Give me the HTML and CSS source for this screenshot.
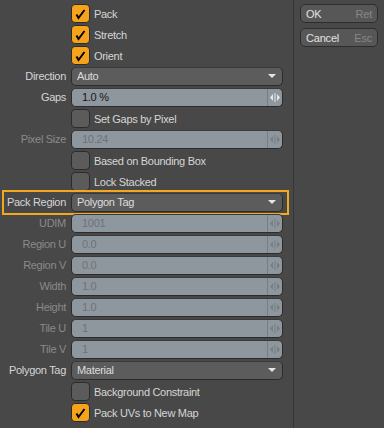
FILE: index.html
```html
<!DOCTYPE html>
<html lang="en">
<head>
    <meta charset="UTF-8">
    <title>Pack UVs</title>
    <link rel="stylesheet" href="styles.css">
</head>
<body>
    <div class="form-panel">
        <div class="row"><span></span><label class="check"><span class="box on"></span>Pack</label></div>
        <div class="row"><span></span><label class="check"><span class="box on"></span>Stretch</label></div>
        <div class="row"><span></span><label class="check"><span class="box on"></span>Orient</label></div>
        <div class="row"><span class="label">Direction</span><div class="field select">Auto</div></div>
        <div class="row"><span class="label">Gaps</span><div class="field number">1.0 %</div></div>
        <div class="row"><span></span><label class="check"><span class="box"></span>Set Gaps by Pixel</label></div>
        <div class="row off"><span class="label">Pixel Size</span><div class="field number">10.24</div></div>
        <div class="row"><span></span><label class="check"><span class="box"></span>Based on Bounding Box</label></div>
        <div class="row"><span></span><label class="check"><span class="box"></span>Lock Stacked</label></div>
        <div class="row highlight"><span class="label">Pack Region</span><div class="field select">Polygon Tag</div></div>
        <div class="row off"><span class="label">UDIM</span><div class="field number">1001</div></div>
        <div class="row off"><span class="label">Region U</span><div class="field number">0.0</div></div>
        <div class="row off"><span class="label">Region V</span><div class="field number">0.0</div></div>
        <div class="row off"><span class="label">Width</span><div class="field number">1.0</div></div>
        <div class="row off"><span class="label">Height</span><div class="field number">1.0</div></div>
        <div class="row off"><span class="label">Tile U</span><div class="field number">1</div></div>
        <div class="row off"><span class="label">Tile V</span><div class="field number">1</div></div>
        <div class="row"><span class="label">Polygon Tag</span><div class="field select">Material</div></div>
        <div class="row"><span></span><label class="check"><span class="box"></span>Background Constraint</label></div>
        <div class="row"><span></span><label class="check"><span class="box on"></span>Pack UVs to New Map</label></div>
    </div>
    <div class="side-panel">
        <button class="btn"><span>OK</span><span class="key">Ret</span></button>
        <button class="btn"><span>Cancel</span><span class="key">Esc</span></button>
    </div>
</body>
</html>
```

FILE: styles.css
```css
body {
    margin: 0;
    width: 384px;
    height: 428px;
    background-color: #484848;
    font-family: 'Liberation Sans', Arial, sans-serif;
    font-size: 11px;
    letter-spacing: -0.3px;
    color: #d6d6d6;
    display: flex;
    overflow: hidden;
}
.form-panel {
    width: 294px;
    padding-top: 4px;
    border-right: 1px solid #363636;
    box-sizing: border-box;
}
.row {
    display: grid;
    grid-template-columns: 66px 212px;
    column-gap: 5px;
    width: 283px;
    height: 21px;
}
.label {
    text-align: right;
    line-height: 19px;
    white-space: nowrap;
}
.row.off .label {
    color: #8a8a8a;
}
.row.highlight {
    position: relative;
}
.row.highlight::after {
    content: "";
    position: absolute;
    left: 2px;
    right: -6px;
    top: -3px;
    bottom: -1px;
    border: 2px solid #f3a81d;
}
.check {
    display: flex;
    align-items: center;
    gap: 4px;
    height: 19px;
    white-space: nowrap;
}
.box {
    width: 17px;
    height: 17px;
    border: 1px solid #2c2c2c;
    border-radius: 4px;
    background-color: #5b5b5b;
    flex: none;
}
.box.on {
    background-color: #f6a31c;
    background-image: url("data:image/svg+xml,%3Csvg xmlns='http://www.w3.org/2000/svg' width='17' height='17'%3E%3Cpath d='M4.5 9.5 L6.5 13 L12.5 5' fill='none' stroke='%23000' stroke-width='2'/%3E%3C/svg%3E");
}
.field {
    height: 19px;
    box-sizing: border-box;
    border: 1px solid #2b2b2b;
    border-top-color: #3a3a3a;
    border-radius: 5px;
    line-height: 17px;
    position: relative;
    white-space: nowrap;
}
.select {
    background-color: #5c5c5c;
    color: #dcdcdc;
    padding-left: 5px;
}
.select::after {
    content: "";
    position: absolute;
    right: 6px;
    top: 6px;
    border-left: 4px solid transparent;
    border-right: 4px solid transparent;
    border-top: 4px solid #e6e6e6;
}
.number {
    background-color: #8f979e;
    color: #161616;
    padding-left: 10px;
}
.row.off .number {
    color: #6d7378;
}
.number::after {
    content: "";
    position: absolute;
    right: 0;
    top: 0;
    bottom: 0;
    width: 14px;
    border-left: 1px solid #767d83;
    background-image: url("data:image/svg+xml,%3Csvg xmlns='http://www.w3.org/2000/svg' width='14' height='17'%3E%3Cpath d='M5 5 L2 8.5 L5 12 Z M9 5 L12 8.5 L9 12 Z' fill='%23e4e6e8'/%3E%3Crect x='6.5' y='4' width='1' height='9' fill='%23e4e6e8'/%3E%3C/svg%3E");
}
.row.off .number::after {
    background-image: url("data:image/svg+xml,%3Csvg xmlns='http://www.w3.org/2000/svg' width='14' height='17'%3E%3Cpath d='M5 5 L2 8.5 L5 12 Z M9 5 L12 8.5 L9 12 Z' fill='%23777e84'/%3E%3Crect x='6.5' y='4' width='1' height='9' fill='%23777e84'/%3E%3C/svg%3E");
}
.side-panel {
    padding: 4px 5px 0 6px;
    display: flex;
    flex-direction: column;
    gap: 5px;
    width: 89px;
    box-sizing: border-box;
}
.btn {
    display: flex;
    justify-content: space-between;
    align-items: center;
    height: 19px;
    padding: 0 5px;
    background-color: #575757;
    border: 1px solid #2d2d2d;
    border-radius: 5px;
    font-family: inherit;
    font-size: 11px;
    letter-spacing: -0.2px;
    color: #e2e2e2;
}
.btn .key {
    color: #888888;
}
```
